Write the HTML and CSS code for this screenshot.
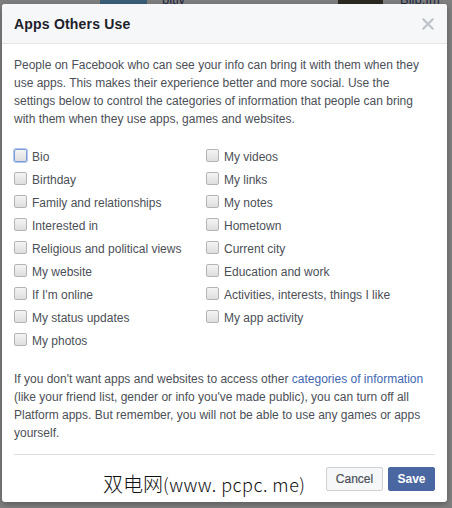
FILE: index.html
```html
<!DOCTYPE html>
<html>
<head>
<meta charset="utf-8">
<link rel="stylesheet" href="styles.css">
</head>
<body>
<div class="backdrop">
  <div class="bg-row">
    <div class="bg-img bg-img-blue"></div>
    <span class="bg-name bg-name-1">bitly</span>
    <div class="bg-img bg-img-dark"></div>
    <span class="bg-name bg-name-2">Blip.fm</span>
  </div>
</div>

<div class="dialog">
  <div class="dialog-header">
    <h2 class="dialog-title">Apps Others Use</h2>
    <svg class="close" width="12" height="12" viewBox="0 0 12 12"><path d="M1.5 1.5 L10.5 10.5 M10.5 1.5 L1.5 10.5" stroke="#bec2c9" stroke-width="2.2" stroke-linecap="square"/></svg>
  </div>
  <div class="dialog-body">
    <p class="intro">People on Facebook who can see your info can bring it with them when they use apps. This makes their experience better and more social. Use the settings below to control the categories of information that people can bring with them when they use apps, games and websites.</p>
    <div class="options">
      <label class="opt"><span class="box box-focus"></span>Bio</label>
      <label class="opt"><span class="box"></span>My videos</label>
      <label class="opt"><span class="box"></span>Birthday</label>
      <label class="opt"><span class="box"></span>My links</label>
      <label class="opt"><span class="box"></span>Family and relationships</label>
      <label class="opt"><span class="box"></span>My notes</label>
      <label class="opt"><span class="box"></span>Interested in</label>
      <label class="opt"><span class="box"></span>Hometown</label>
      <label class="opt"><span class="box"></span>Religious and political views</label>
      <label class="opt"><span class="box"></span>Current city</label>
      <label class="opt"><span class="box"></span>My website</label>
      <label class="opt"><span class="box"></span>Education and work</label>
      <label class="opt"><span class="box"></span>If I'm online</label>
      <label class="opt"><span class="box"></span>Activities, interests, things I like</label>
      <label class="opt"><span class="box"></span>My status updates</label>
      <label class="opt"><span class="box"></span>My app activity</label>
      <label class="opt"><span class="box"></span>My photos</label>
    </div>
    <p class="note">If you don't want apps and websites to access other <a class="link" href="#">categories of information</a> (like your friend list, gender or info you've made public), you can turn off all Platform apps. But remember, you will not be able to use any games or apps yourself.</p>
  </div>
  <div class="dialog-footer">
    <button class="btn btn-cancel">Cancel</button>
    <button class="btn btn-save">Save</button>
  </div>
  <div class="watermark"><span class="wm-cjk">双电网</span><span class="wm-latin">(www. pcpc. me)</span></div>
</div>
</body>
</html>
```

FILE: styles.css
```css
html, body {
  margin: 0;
  padding: 0;
}
body {
  width: 452px;
  height: 508px;
  background: #7f7f7f;
  font-family: "Liberation Sans", Arial, sans-serif;
  position: relative;
  overflow: hidden;
}
.backdrop {
  height: 508px;
}
.bg-row {
  position: relative;
  height: 10px;
}
.bg-img {
  position: absolute;
  top: -10px;
  height: 14px;
}
.bg-img-blue {
  left: 100px;
  width: 47px;
  background: #3b5f7a;
}
.bg-img-dark {
  left: 338px;
  width: 45px;
  background: #2a2a22;
}
.bg-name {
  position: absolute;
  top: -8px;
  font-size: 13px;
  color: #1f2a44;
}
.bg-name-1 { left: 162px; }
.bg-name-2 { left: 400px; }

.dialog {
  position: absolute;
  left: 2px;
  top: 4px;
  width: 445px;
  background: #fff;
  border-radius: 3px;
  box-shadow: 0 2px 6px rgba(0,0,0,0.3);
  overflow: hidden;
}
.dialog-header {
  height: 39px;
  background: #f6f7f9;
  border-bottom: 1px solid #e5e5e5;
  display: flex;
  align-items: center;
  justify-content: space-between;
  padding: 0 13px 0 12px;
}
.dialog-title {
  margin: 0;
  font-size: 14px;
  font-weight: bold;
  color: #1d2129;
  letter-spacing: 0.2px;
}
.close {
  display: block;
  margin-top: 1px;
}
.dialog-body {
  padding: 12px 12px 0 12px;
  font-size: 12px;
  line-height: 18px;
  color: #4b4f56;
}
.intro {
  margin: 0 0 17px 0;
  max-width: 416px;
}
.options {
  display: grid;
  grid-template-columns: 192px 1fr;
  grid-auto-rows: 23px;
}
.opt {
  display: flex;
  align-items: center;
  white-space: nowrap;
}
.box {
  width: 11px;
  height: 11px;
  border: 1px solid #b4b4b4;
  border-radius: 2px;
  background: linear-gradient(#f4f4f4, #dedede);
  margin-right: 5px;
  margin-top: -3px;
  flex: none;
}
.box-focus {
  border-color: #7b9bd6;
  box-shadow: 0 0 0 1px #b6c8ee;
}
.note {
  margin: 18px 0 0 0;
  padding-bottom: 12px;
  border-bottom: 1px solid #dddfe2;
}
.link {
  color: #4267b2;
  text-decoration: none;
}
.dialog-footer {
  display: flex;
  justify-content: flex-end;
  gap: 5px;
  padding: 12px 12px 11px 12px;
}
.btn {
  height: 24px;
  font-family: "Liberation Sans", Arial, sans-serif;
  font-size: 12px;
  font-weight: bold;
  border-radius: 2px;
  padding: 0 8px;
  line-height: 22px;
}
.btn-cancel {
  width: 57px;
  background: #f6f7f9;
  border: 1px solid #ced0d4;
  color: #4b4f56;
  font-weight: normal;
  -webkit-text-stroke: 0.2px #4b4f56;
}
.btn-save {
  width: 47px;
  background: #4b67a1;
  border: 1px solid #4b67a1;
  color: #fff;
}
.watermark {
  position: absolute;
  left: 101px;
  top: 466px;
  font-family: "Noto Sans CJK SC", sans-serif;
  font-size: 20px;
  line-height: 28px;
  color: #111;
  white-space: nowrap;
  font-weight: 300;
}
.wm-latin {
  font-size: 18px;
  letter-spacing: 0.5px;
}
```
